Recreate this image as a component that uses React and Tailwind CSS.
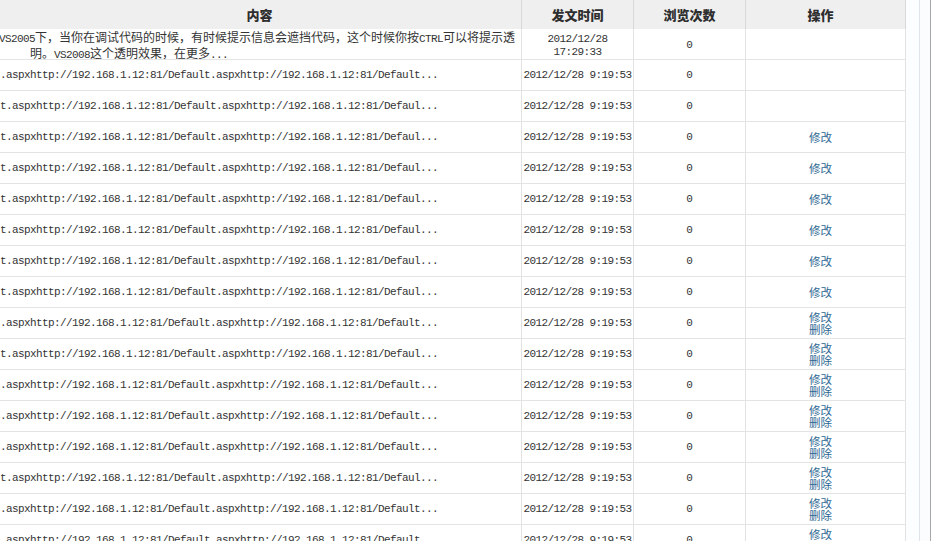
const mono = "font-['Liberation_Mono','Noto_Sans_CJK_SC',monospace]";

const urlA = ".aspxhttp://192.168.1.12:81/Default.aspxhttp://192.168.1.12:81/Default...";
const urlB = "t.aspxhttp://192.168.1.12:81/Default.aspxhttp://192.168.1.12:81/Defaul...";

const rows = [
  { text: urlA, ops: 0 },
  { text: urlB, ops: 0 },
  { text: urlB, ops: 1 },
  { text: urlB, ops: 1 },
  { text: urlB, ops: 1 },
  { text: urlB, ops: 1 },
  { text: urlB, ops: 1 },
  { text: urlB, ops: 1 },
  { text: urlA, ops: 2 },
  { text: urlB, ops: 2 },
  { text: urlA, ops: 2 },
  { text: urlA, ops: 2 },
  { text: urlA, ops: 2 },
  { text: urlB, ops: 2 },
  { text: urlA, ops: 2 },
  { text: urlA, ops: 2 },
];

const cjk = "font-['Noto_Sans_CJK_SC',sans-serif]";

function Ascii({ children }) {
  return <span className={`${mono} text-[11px] tracking-[-0.6px]`}>{children}</span>;
}

function Row({ children }) {
  return (
    <div className="grid grid-cols-[521px_112px_112px_161px] h-[31px] border-b border-[#e4e4e4] bg-white text-[#333]">
      {children}
    </div>
  );
}

function Ops({ n }) {
  return (
    <div className={`border-l border-r border-[#e2e2e2] flex flex-col items-center justify-center pr-[10px] text-[#2d6893] text-[11.5px] leading-[12px] ${cjk}`}>
      {n >= 1 && <span>修改</span>}
      {n >= 2 && <span>删除</span>}
    </div>
  );
}

export default function App() {
  return (
    <div className="w-[932px] h-[541px] overflow-hidden bg-white flex">
      <div className="w-[906px] shrink-0">
        <div className={`grid grid-cols-[521px_112px_112px_161px] h-[29px] bg-[#efefef] text-[#2e2e2e] text-[13px] font-black ${cjk}`}>
          <div className="flex items-center justify-center pr-[2px]">内容</div>
          <div className="flex items-center justify-center border-l border-[#d9d9d9]">发文时间</div>
          <div className="flex items-center justify-center border-l border-[#d9d9d9]">浏览次数</div>
          <div className="flex items-center justify-center border-l border-r border-[#d9d9d9] pr-[10px]">操作</div>
        </div>

        <Row>
          <div className={`overflow-hidden flex flex-col justify-center pt-[3px] text-[12px] leading-[13px] whitespace-nowrap ${cjk}`}>
            <div className="-ml-[1px]">
              <Ascii>VS2005</Ascii>下，当你在调试代码的时候，有时候提示信息会遮挡代码，这个时候你按<Ascii>CTRL</Ascii>可以将提示透
            </div>
            <div className="pl-[30px]">
              明。<Ascii>VS2008</Ascii>这个透明效果，在更多<Ascii>...</Ascii>
            </div>
          </div>
          <div className={`border-l border-[#e2e2e2] flex flex-col items-center justify-center pt-[3px] leading-[13px] ${mono} text-[11px] tracking-[-0.6px]`}>
            <span>2012/12/28</span>
            <span>17:29:33</span>
          </div>
          <div className={`border-l border-[#e2e2e2] flex items-center justify-center pt-[2px] ${mono} text-[11px]`}>0</div>
          <Ops n={0} />
        </Row>

        {rows.map((r, i) => (
          <Row key={i}>
            <div className={`overflow-hidden whitespace-nowrap flex items-center pt-[1px] ${mono} text-[11px] tracking-[-0.6px]`}>
              {r.text}
            </div>
            <div className={`border-l border-[#e2e2e2] flex items-center justify-center pt-[1px] ${mono} text-[11px] tracking-[-0.6px]`}>
              2012/12/28 9:19:53
            </div>
            <div className={`border-l border-[#e2e2e2] flex items-center justify-center pt-[1px] ${mono} text-[11px]`}>0</div>
            <Ops n={r.ops} />
          </Row>
        ))}
      </div>
      <div className="w-[13px] shrink-0 bg-[#fcfdfe]" />
      <div className="w-[11px] shrink-0 border-l border-[#dfe3ea] bg-[#fbfcfd]" />
      <div className="w-[2px] shrink-0 border-l border-[#a8a8a8] bg-white" />
    </div>
  );
}
